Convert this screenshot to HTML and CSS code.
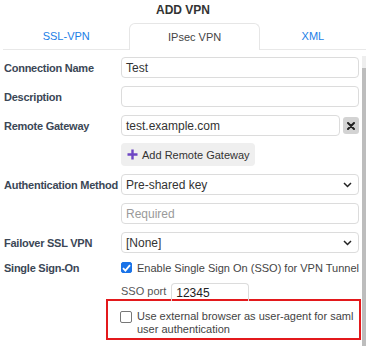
FILE: index.html
```
<!DOCTYPE html>
<html lang="en">
<head>
  <meta charset="UTF-8">
  <title>Add VPN</title>
  <link rel="stylesheet" href="styles.css">
</head>
<body>
  <div class="title">ADD VPN</div>

  <div class="tabs">
    <div class="tab tab-ssl">SSL-VPN</div>
    <div class="tab tab-ipsec active">IPsec VPN</div>
    <div class="tab tab-xml">XML</div>
  </div>

  <div class="main">
    <div class="form">
      <!-- Connection name -->
      <div class="row">
        <div class="label">Connection Name</div>
        <div class="input">Test</div>
      </div>

      <!-- Description -->
      <div class="row">
        <div class="label">Description</div>
        <div class="input"></div>
      </div>

      <!-- Remote gateway -->
      <div class="row">
        <div class="label">Remote Gateway</div>
        <div class="input">test.example.com</div>
        <div class="remove">
          <svg width="8" height="8" viewBox="0 0 8 8"><path d="M1 1L7 7M7 1L1 7" stroke="#222" stroke-width="2" stroke-linecap="round"/></svg>
        </div>
      </div>

      <div class="row row-btn">
        <div class="label"></div>
        <div class="add-btn">
          <svg width="11" height="11" viewBox="0 0 11 11"><path d="M5.5 0.5V10.5M0.5 5.5H10.5" stroke="#6d45c4" stroke-width="2.4"/></svg>
          Add Remote Gateway
        </div>
      </div>

      <!-- Authentication -->
      <div class="row">
        <div class="label">Authentication Method</div>
        <div class="input select">
          <span>Pre-shared key</span>
          <svg width="9" height="6" viewBox="0 0 9 6"><path d="M1 1L4.5 4.5L8 1" stroke="#222" stroke-width="1.5" fill="none"/></svg>
        </div>
      </div>

      <div class="row">
        <div class="label"></div>
        <div class="input placeholder">Required</div>
      </div>

      <!-- Failover -->
      <div class="row row-failover">
        <div class="label">Failover SSL VPN</div>
        <div class="input select">
          <span>[None]</span>
          <svg width="9" height="6" viewBox="0 0 9 6"><path d="M1 1L4.5 4.5L8 1" stroke="#222" stroke-width="1.5" fill="none"/></svg>
        </div>
      </div>

      <!-- SSO -->
      <div class="row row-sso">
        <div class="label">Single Sign-On</div>
        <div class="check-line">
          <span class="checkbox checked">
            <svg width="9" height="8" viewBox="0 0 9 8"><path d="M1 4.2L3.4 6.6L8 1.2" stroke="#fff" stroke-width="1.8" fill="none"/></svg>
          </span>
          Enable Single Sign On (SSO) for VPN Tunnel
        </div>
      </div>

      <div class="row row-port">
        <div class="label"></div>
        <span class="port-label">SSO port</span>
        <div class="port-input">12345</div>
      </div>

      <div class="highlight">
        <span class="checkbox"></span>
        <span class="highlight-text">Use external browser as user-agent for saml<br>user authentication</span>
      </div>
    </div>

    <div class="scrollbar">
      <div class="scroll-arrow"></div>
      <div class="scroll-thumb"></div>
    </div>
  </div>
</body>
</html>
```

FILE: styles.css
```
body {
  margin: 0;
  width: 366px;
  height: 346px;
  overflow: hidden;
  font-family: "Liberation Sans", Arial, sans-serif;
  font-size: 11px;
  color: #333;
  background: #fff;
}
.title {
  height: 22px;
  line-height: 21px;
  text-align: center;
  font-size: 12px;
  font-weight: bold;
  color: #333;
}
.tabs {
  display: flex;
  height: 26px;
  margin: 1px 0 0 3px;
  border-bottom: 1px solid #e8e8e8;
}
.tab {
  height: 26px;
  line-height: 26px;
  text-align: center;
  color: #1a7ee6;
  font-size: 11px;
  box-sizing: border-box;
}
.tab-ssl {
  width: 131px;
}
.tab-ipsec {
  width: 135px;
}
.tab-xml {
  width: 110px;
}
.tab.active {
  height: 27px;
  color: #444;
  background: #fff;
  border: 1px solid #e6e6e6;
  border-bottom: none;
  border-radius: 6px 6px 0 0;
}
.main {
  display: flex;
  height: 296px;
}
.form {
  flex: 1;
  padding: 7px 3px 0 4px;
}
.row {
  display: flex;
  align-items: center;
  margin-bottom: 8px;
}
.row-btn {
  margin-top: -1px;
}
.row-failover {
  margin-top: 1px;
}
.row-sso {
  margin-top: 1px;
  height: 13px;
  margin-bottom: 8px;
}
.row-port {
  height: 17px;
  margin-bottom: 0;
}
.label {
  width: 117px;
  flex: none;
  font-weight: bold;
  color: #3b4756;
  letter-spacing: -0.25px;
  white-space: nowrap;
}
.input {
  flex: 1;
  height: 21px;
  box-sizing: border-box;
  border: 1px solid #dcdcdc;
  border-radius: 4px;
  padding: 0 4px;
  display: flex;
  align-items: center;
  color: #333;
  font-size: 12px;
}
.placeholder {
  color: #9a9a9a;
}
.select {
  justify-content: space-between;
  padding-right: 6px;
}
.remove {
  width: 16px;
  height: 17px;
  margin-left: 3px;
  background: #d3d3d3;
  border-radius: 3px;
  display: flex;
  align-items: center;
  justify-content: center;
}
.add-btn {
  height: 23px;
  padding: 0 5px 0 6px;
  display: flex;
  align-items: center;
  gap: 4px;
  background: #efefef;
  border-radius: 4px;
  color: #333;
  font-size: 11px;
}
.check-line {
  display: flex;
  align-items: center;
  gap: 5px;
  white-space: nowrap;
  color: #444;
}
.checkbox {
  width: 11px;
  height: 11px;
  flex: none;
  box-sizing: border-box;
  border: 1px solid #767676;
  border-radius: 2px;
  background: #fff;
  display: flex;
  align-items: center;
  justify-content: center;
}
.checkbox.checked {
  background: #1a73e8;
  border-color: #1a73e8;
}
.port-label {
  color: #555;
  margin-right: 5px;
}
.port-input {
  width: 78px;
  height: 18px;
  margin-top: 2px;
  box-sizing: border-box;
  border: 1px solid #dcdcdc;
  border-bottom: none;
  border-radius: 4px 4px 0 0;
  padding: 2px 4px 0;
  color: #222;
  font-size: 12px;
}
.highlight {
  display: flex;
  align-items: flex-start;
  gap: 5px;
  margin: 0 -2px 0 102px;
  height: 41px;
  box-sizing: border-box;
  border: 2px solid #e3191c;
  padding: 9px 0 0 12px;
}
.highlight .checkbox {
  width: 12px;
  height: 12px;
  margin-top: 1px;
  border-color: #777;
}
.highlight-text {
  line-height: 13px;
  color: #444;
}
.scrollbar {
  width: 4px;
  flex: none;
  margin-top: 6px;
  background: #eeeeee;
  display: flex;
  flex-direction: column;
}
.scroll-arrow {
  height: 12px;
}
.scroll-thumb {
  flex: 1;
  background: #bdbdbd;
}
```
